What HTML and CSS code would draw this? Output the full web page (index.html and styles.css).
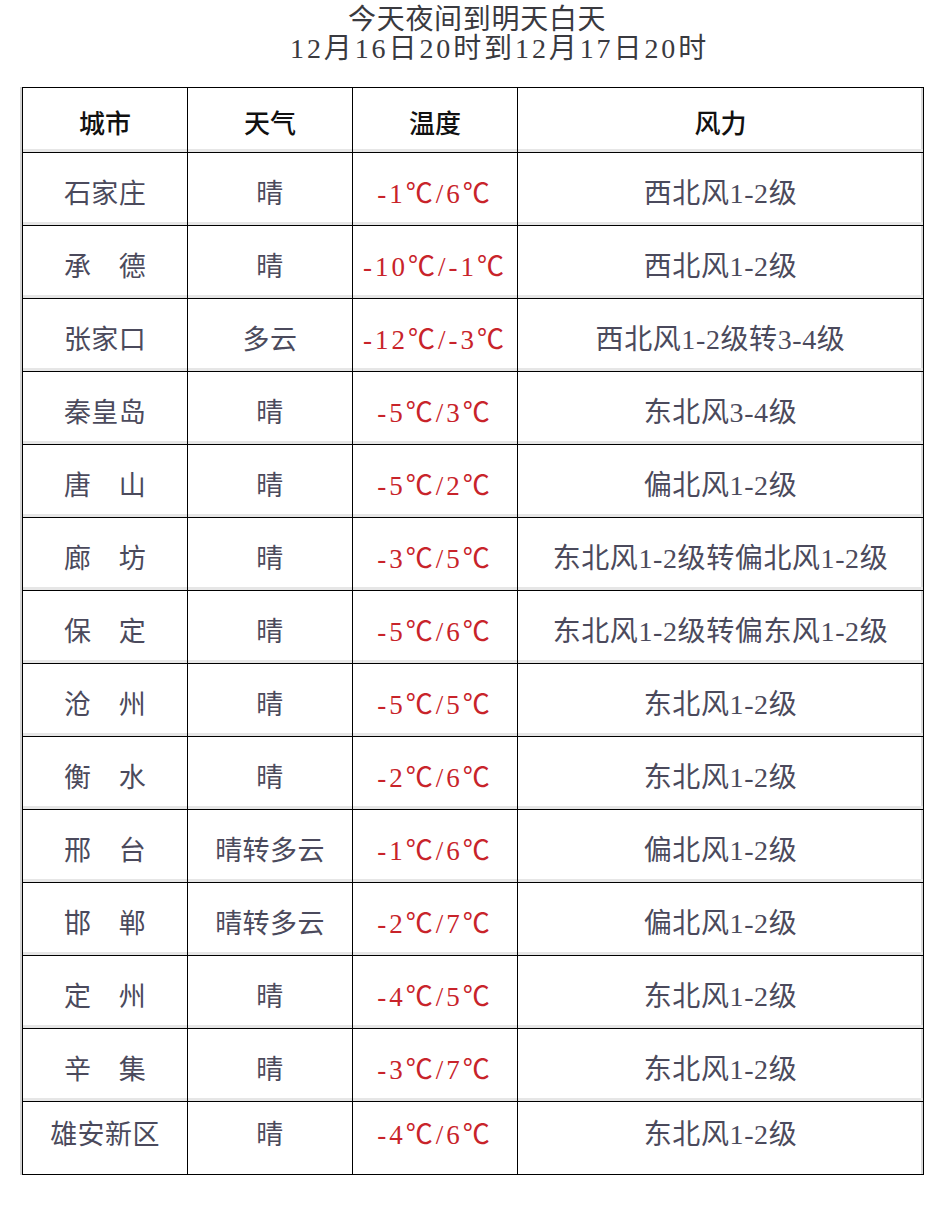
FILE: index.html
```html
<!DOCTYPE html>
<html lang="zh-CN">
<head>
<meta charset="utf-8">
<title>今天夜间到明天白天</title>
<link rel="stylesheet" href="styles.css">
</head>
<body>
<div class="page">
  <div class="title">
    <div class="t1">今天夜间到明天白天</div>
    <div class="t2">12月16日20时到12月17日20时</div>
  </div>
  <table class="wx">
    <colgroup>
      <col class="c1"><col class="c2"><col class="c3"><col class="c4">
    </colgroup>
    <thead>
      <tr><th>城市</th><th>天气</th><th>温度</th><th class="last">风力</th></tr>
    </thead>
    <tbody>
      <tr><td>石家庄</td><td>晴</td><td class="temp">-1℃/6℃</td><td class="last">西北风1-2级</td></tr>
      <tr><td>承　德</td><td>晴</td><td class="temp">-10℃/-1℃</td><td class="last">西北风1-2级</td></tr>
      <tr><td>张家口</td><td>多云</td><td class="temp">-12℃/-3℃</td><td class="last">西北风1-2级转3-4级</td></tr>
      <tr><td>秦皇岛</td><td>晴</td><td class="temp">-5℃/3℃</td><td class="last">东北风3-4级</td></tr>
      <tr><td>唐　山</td><td>晴</td><td class="temp">-5℃/2℃</td><td class="last">偏北风1-2级</td></tr>
      <tr><td>廊　坊</td><td>晴</td><td class="temp">-3℃/5℃</td><td class="last">东北风1-2级转偏北风1-2级</td></tr>
      <tr><td>保　定</td><td>晴</td><td class="temp">-5℃/6℃</td><td class="last">东北风1-2级转偏东风1-2级</td></tr>
      <tr><td>沧　州</td><td>晴</td><td class="temp">-5℃/5℃</td><td class="last">东北风1-2级</td></tr>
      <tr><td>衡　水</td><td>晴</td><td class="temp">-2℃/6℃</td><td class="last">东北风1-2级</td></tr>
      <tr><td>邢　台</td><td>晴转多云</td><td class="temp">-1℃/6℃</td><td class="last">偏北风1-2级</td></tr>
      <tr><td>邯　郸</td><td>晴转多云</td><td class="temp">-2℃/7℃</td><td class="last">偏北风1-2级</td></tr>
      <tr><td>定　州</td><td>晴</td><td class="temp">-4℃/5℃</td><td class="last">东北风1-2级</td></tr>
      <tr><td>辛　集</td><td>晴</td><td class="temp">-3℃/7℃</td><td class="last">东北风1-2级</td></tr>
      <tr class="end"><td>雄安新区</td><td>晴</td><td class="temp">-4℃/6℃</td><td class="last">东北风1-2级</td></tr>
    </tbody>
  </table>
</div>
</body>
</html>
```

FILE: styles.css
```css
html, body {
  margin: 0;
  padding: 0;
  background: #ffffff;
}

.page {
  width: 942px;
  padding-top: 5px;
  font-family: "Liberation Serif", "Noto Sans CJK SC", serif;
}

.title {
  color: #3a3a3f;
  font-size: 28px;
  line-height: 29px;
  height: 82px;
}

.t1 {
  padding-left: 348px;
  letter-spacing: 0.7px;
}

.t2 {
  padding-left: 290px;
  letter-spacing: 2.9px;
}

.wx {
  margin-left: 22px;
  width: 901px;
  border-collapse: collapse;
  table-layout: fixed;
  border: 1px solid #000;
  box-shadow: -2px 0 0 #d4d4d4;
}

.c1, .c2, .c3 { width: 165px; }
.c4 { width: 406px; }

.wx th,
.wx td {
  border: 1px solid #000;
  text-align: center;
  vertical-align: middle;
  padding: 0;
  white-space: nowrap;
  box-shadow: inset 0 -3px 0 #e6e6e6;
}

.wx th {
  height: 62px;
  font-size: 26px;
  font-weight: 500;
  color: #111111;
  padding-top: 2px;
}

.wx td {
  height: 68px;
  font-size: 27px;
  color: #4b4a5c;
  padding-top: 4px;
  letter-spacing: 0.4px;
}

.wx .last {
  box-shadow: inset 0 -3px 0 #e6e6e6, inset -2px 0 0 #d8d8d8;
}

.wx td.temp {
  color: #c8232a;
  letter-spacing: 3px;
}

.wx td.last {
  font-size: 28px;
  letter-spacing: 0.6px;
}

.wx tr.end td {
  height: 60px;
  padding-top: 0;
  padding-bottom: 12px;
  box-shadow: none;
}

.wx tr.end td.last {
  box-shadow: inset -2px 0 0 #d8d8d8;
}
```
